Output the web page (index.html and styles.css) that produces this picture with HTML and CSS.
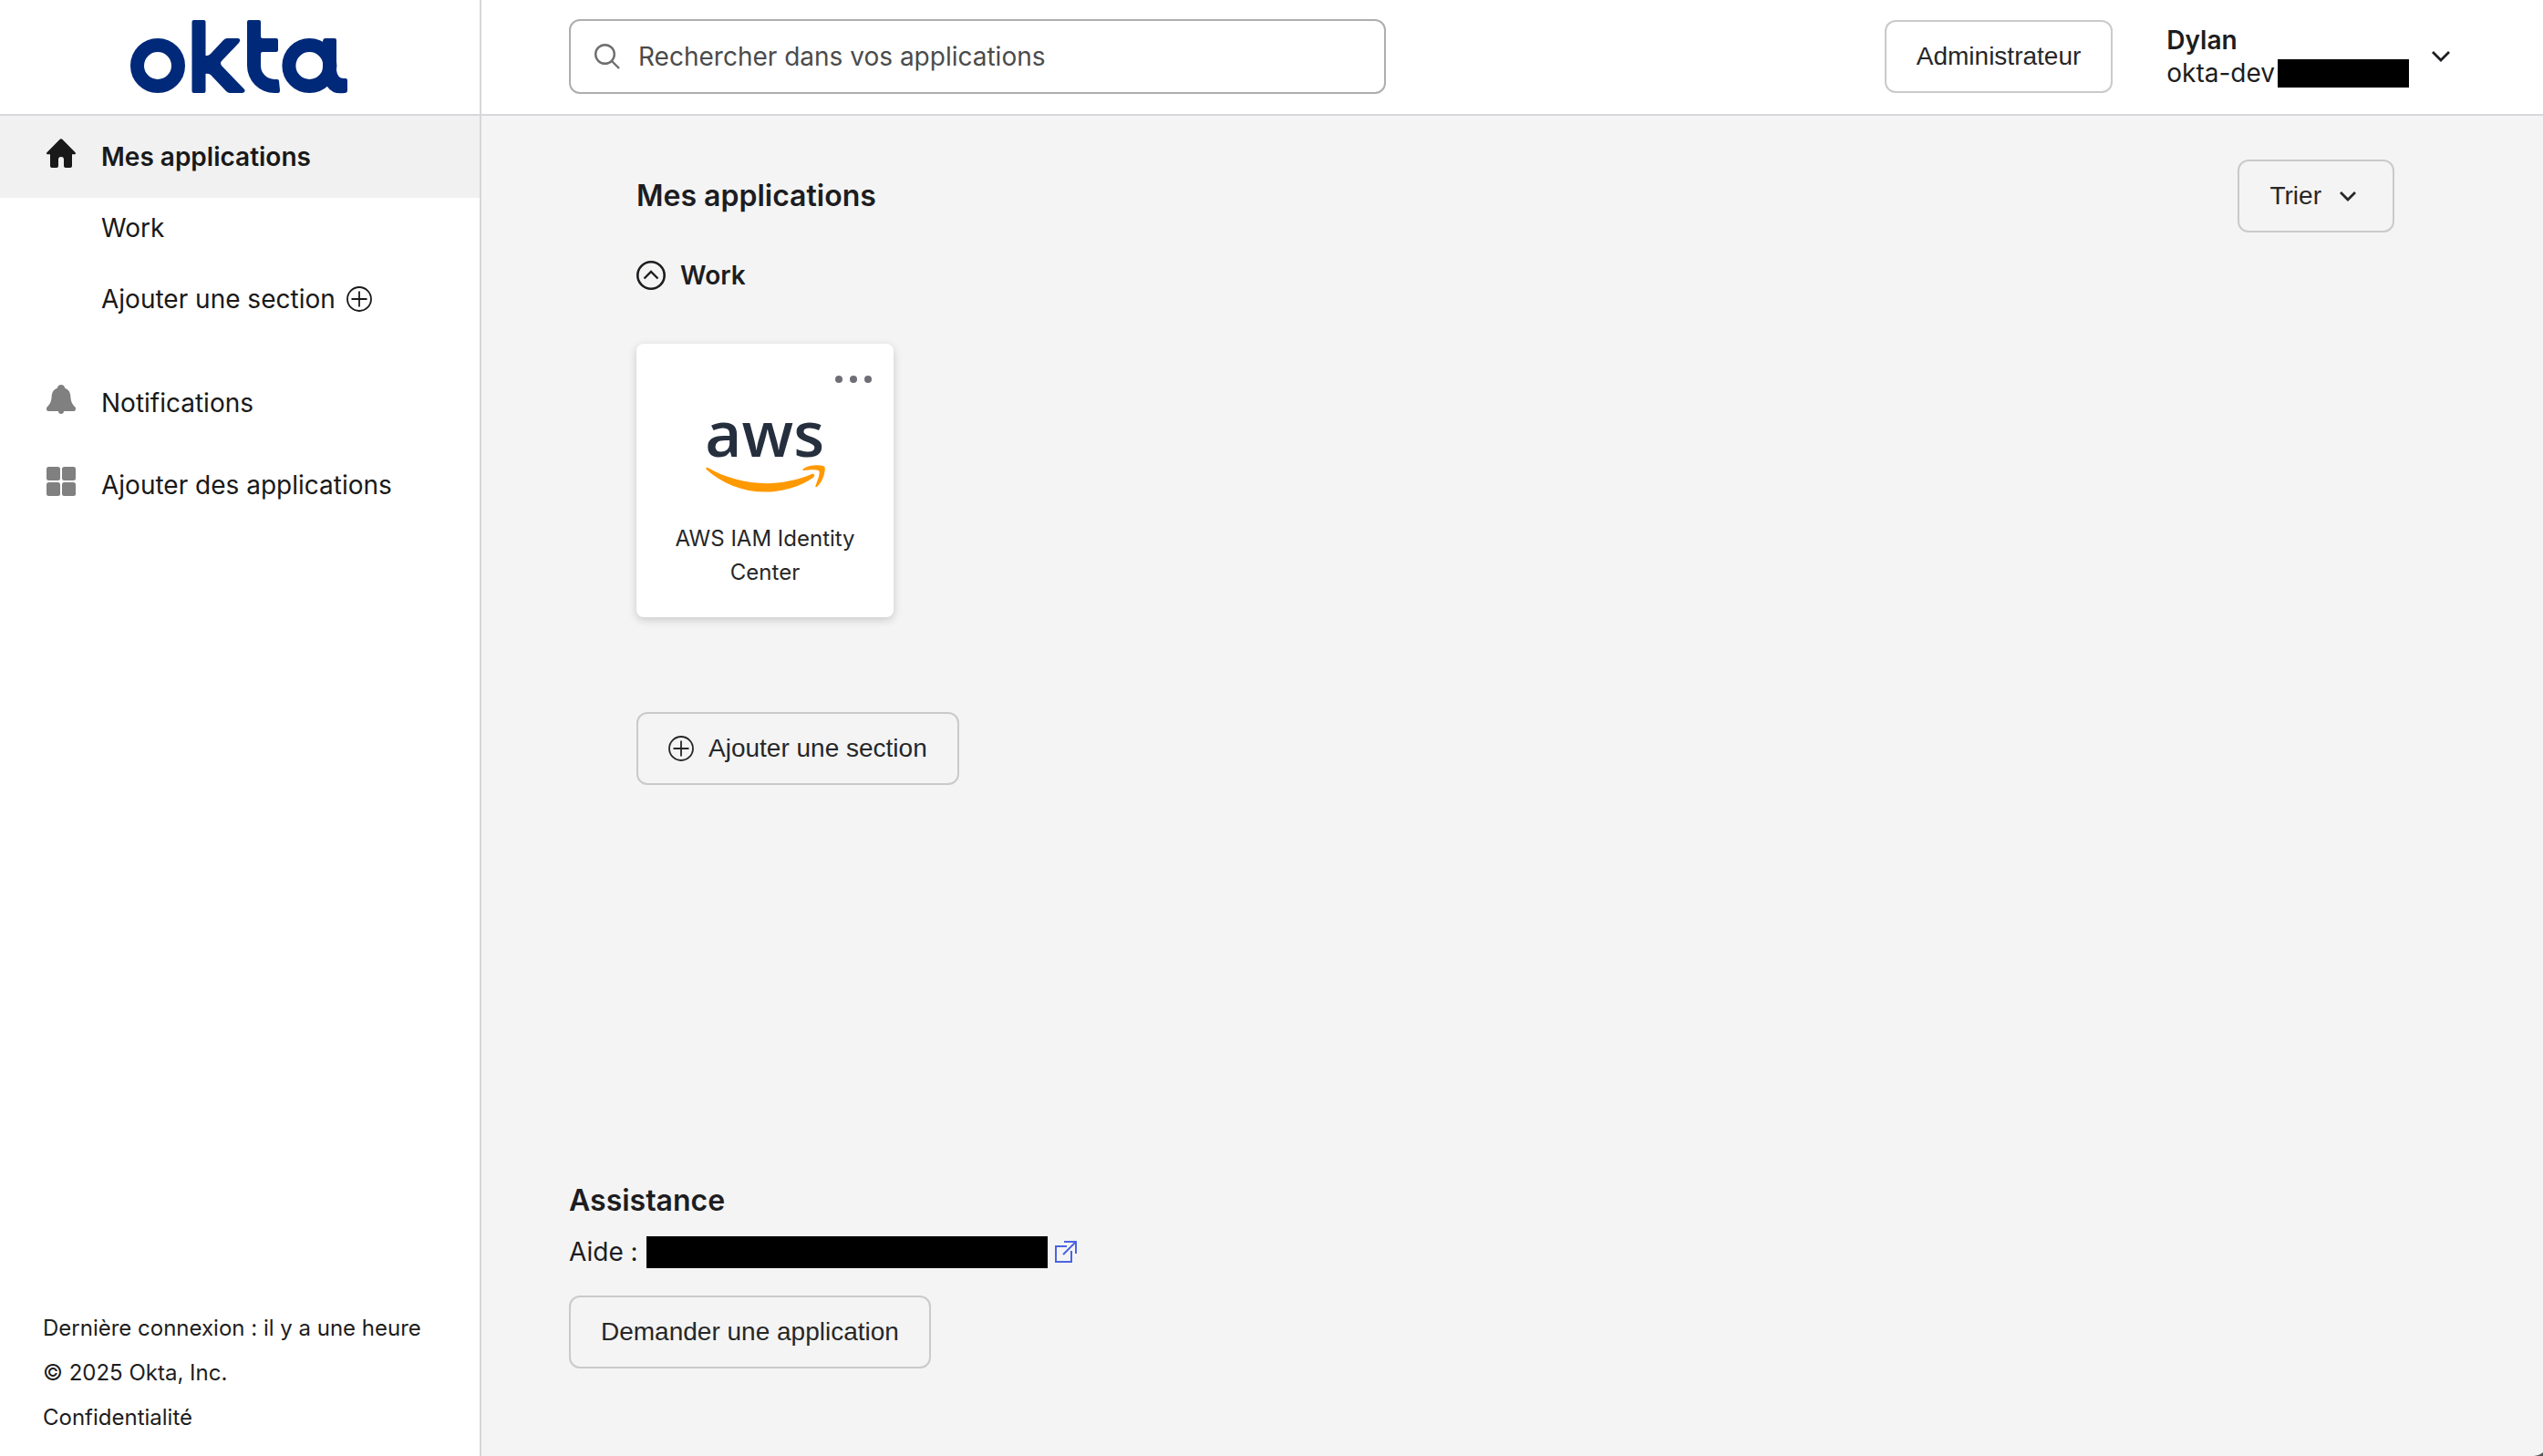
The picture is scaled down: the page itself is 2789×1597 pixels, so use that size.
FILE: index.html
```html
<!DOCTYPE html>
<html lang="fr">
<head>
<meta charset="utf-8">
<meta name="viewport" content="width=device-width, initial-scale=1">
<title>Mes applications</title>
<link rel="stylesheet" href="styles.css">
</head>
<body>
<div class="layout">
  <aside class="sidebar">
    <a class="brand" href="#" aria-label="okta">
      <svg class="brand-logo" viewBox="0 0 238 80" fill="#00297a" aria-hidden="true">
        <circle cx="30" cy="50" r="22.5" fill="none" stroke="#00297a" stroke-width="15"/>
        <rect x="67.5" width="15" height="80" rx="2"/>
        <path d="M82 39h2q2 0 4-2l14-15q2-2 4-2h12q4 1 1 5l-19 20q-2 2 0 5l25 26q2 3-2 4h-14q-2 0-4-2L88 60q-3-2-6-1z"/>
        <path d="M130 0h11q2 0 2 2v16q0 2 2 2h15q2 0 2 2v11q0 2-2 2h-15q-2 0-2 2v13a15 15 0 0 0 15 15h3q2 0 2 2l1 10q0 3-2 3h-4a30 30 0 0 1-30-30V2q0-2 2-2z"/>
        <circle cx="196.400" cy="50" r="22.500" fill="none" stroke="#00297a" stroke-width="15"/>
        <path d="M211 24q0-4 3-4h10q2 0 2 2v33q1 9 8 9h2q2 0 2 2v11q0 3-3 3-13 2-19-7l-6-6 1-17z"/>
      </svg>
    </a>
    <nav class="nav">
      <a class="nav-item active" href="#">
        <svg class="nav-icon" viewBox="0 0 32 32" fill="currentColor" aria-hidden="true"><path d="M14.700.700a2 2 0 0 1 2.600 0L31.600 15.300c.800.900.400 2-.600 2h-3V30a2 2 0 0 1-2 2h-5a2 2 0 0 1-2-2v-7a3 3 0 0 0-6 0v7a2 2 0 0 1-2 2H6a2 2 0 0 1-2-2V17.300H1c-1 0-1.400-1.100-.600-2z"/></svg>
        <span>Mes applications</span>
      </a>
      <div class="sub-nav">
        <a class="sub-item" href="#work">Work</a>
        <button class="sub-item" type="button">Ajouter une section
          <svg class="plus-icon" viewBox="0 0 28 28" fill="none" stroke="currentColor" stroke-width="1.800" aria-hidden="true"><circle cx="14" cy="14" r="13"/><path d="M14 5.500v17M5.500 14h17"/></svg>
        </button>
      </div>
      <a class="nav-item muted" href="#">
        <svg class="nav-icon" viewBox="0 0 32 32" fill="currentColor" aria-hidden="true"><path d="M12 3.500C12 1.500 13.800 0 16 0s4 1.500 4 3.500c4 1.500 6 4.500 6.300 8.500.500 7 1.700 9 4.700 12 2 2.300 1 5-1.500 5H19c0 2-1.300 3-3 3s-3-1-3-3H2.500C0 29-1 26.300 1 24c3-3 4.200-5 4.700-12C6 8 8 5 12 3.500z"/></svg>
        <span>Notifications</span>
      </a>
      <a class="nav-item muted" href="#">
        <svg class="nav-icon" viewBox="0 0 32 32" fill="currentColor" aria-hidden="true"><rect width="15" height="15" rx="2.500"/><rect x="17" width="15" height="15" rx="2.500"/><rect y="17" width="15" height="15" rx="2.500"/><rect x="17" y="17" width="15" height="15" rx="2.500"/></svg>
        <span>Ajouter des applications</span>
      </a>
    </nav>
    <footer class="sidebar-footer">
      <span>Dernière connexion : il y a une heure</span>
      <span>© 2025 Okta, Inc.</span>
      <a href="#">Confidentialité</a>
    </footer>
  </aside>

  <div class="page">
    <header class="topbar">
      <label class="search">
        <svg class="search-icon" viewBox="0 0 28 28" fill="none" stroke="currentColor" stroke-width="2.400" aria-hidden="true"><circle cx="11.500" cy="11.500" r="10.300"/><path d="M19 19l8 8"/></svg>
        <input class="search-input" type="search" aria-label="Rechercher dans vos applications" placeholder="Rechercher dans vos applications">
      </label>
      <div class="account">
        <button class="btn" type="button">Administrateur</button>
        <button class="user" type="button">
          <span class="user-text">
            <strong>Dylan</strong>
            <span class="user-org">okta-dev<span class="redacted redacted-org"></span></span>
          </span>
          <svg class="user-chevron" viewBox="0 0 20 12" fill="none" stroke="currentColor" stroke-width="2.800" aria-hidden="true"><path d="M1 1l9 9 9-9"/></svg>
        </button>
      </div>
    </header>

    <main class="content">
      <div class="title-row">
        <h1 class="title">Mes applications</h1>
        <button class="btn sort" type="button">Trier
          <svg class="sort-chevron" viewBox="0 0 18 11" fill="none" stroke="currentColor" stroke-width="2.800" aria-hidden="true"><path d="M1 1l8 8 8-8"/></svg>
        </button>
      </div>
      <section id="work">
        <h2 class="section-head">
          <button class="section-toggle" type="button" aria-expanded="true">
            <svg class="toggle-icon" viewBox="0 0 32 32" fill="none" stroke="currentColor" aria-hidden="true"><circle cx="16" cy="16" r="14.700" stroke-width="2.600"/><path d="M8.500 19.500L16 12l7.500 7.500" stroke-width="2.400"/></svg>
            Work
          </button>
        </h2>
        <article class="card">
          <button class="card-menu" type="button" aria-label="Options">
            <svg class="dots" viewBox="0 0 40 8" fill="#6e6e78" aria-hidden="true"><circle cx="4" cy="4" r="4"/><circle cx="20" cy="4" r="4"/><circle cx="36" cy="4" r="4"/></svg>
          </button>
          <svg class="aws-logo" viewBox="0 0 304 182" aria-hidden="true">
            <text class="aws-word" x="150" y="92" text-anchor="middle">aws</text>
            <path fill="#f90" d="M273.500 143.700c-32.900 24.300-80.700 37.200-121.800 37.200-57.600 0-109.500-21.300-148.700-56.700-3.100-2.800-.300-6.600 3.400-4.400 42.400 24.600 94.700 39.500 148.800 39.500 36.500 0 76.600-7.600 113.500-23.200 5.500-2.500 10.200 3.600 4.800 7.600z"/>
            <path fill="#f90" d="M287.200 128.100c-4.200-5.400-27.800-2.600-38.500-1.300-3.200.400-3.700-2.400-.800-4.500 18.800-13.200 49.700-9.400 53.300-5 3.600 4.500-1 35.400-18.600 50.200-2.700 2.300-5.300 1.100-4.100-1.900 4-9.900 12.900-32.200 8.700-37.500z"/>
          </svg>
          <a class="card-name" href="#">AWS IAM Identity Center</a>
        </article>
      </section>
      <button class="btn add-section" type="button">
        <svg class="plus-icon" viewBox="0 0 28 28" fill="none" stroke="currentColor" stroke-width="1.800" aria-hidden="true"><circle cx="14" cy="14" r="13"/><path d="M14 5.500v17M5.500 14h17"/></svg>
        Ajouter une section
      </button>
    </main>

    <section class="support">
      <h2 class="title">Assistance</h2>
      <p class="help">Aide :
        <a class="help-link" href="#" aria-label="Aide">
          <span class="redacted redacted-mail"></span>
          <svg class="external" viewBox="0 0 24 24" fill="none" stroke="currentColor" stroke-width="2" aria-hidden="true"><path d="M13 6H1v17h17V11M10 1h13v13M23 1L9 15"/></svg>
        </a>
      </p>
      <button class="btn" type="button">Demander une application</button>
    </section>
  </div>
</div>
<svg class="corner" viewBox="0 0 12 4" aria-hidden="true"><path d="M2 4Q8 3.500 12 0V4z" fill="#555"/></svg>
</body>
</html>
```
FILE: styles.css
```css
* {
  box-sizing: border-box;
}

body {
  margin: 0;
  background: #f4f4f4;
  color: #1d1d21;
  font: 400 28px/36px Inter, "Liberation Sans", sans-serif;
}

a {
  color: inherit;
  text-decoration: none;
}

button {
  padding: 0;
  border: 0;
  background: none;
  color: inherit;
  font: inherit;
  text-align: left;
  cursor: pointer;
}

svg {
  display: block;
  flex: none;
  overflow: visible;
}

h1,
h2,
p {
  margin: 0;
}

.layout {
  display: grid;
  grid-template-columns: 528px 1fr;
  min-height: 100vh;
}

/* Sidebar */

.sidebar {
  display: flex;
  flex-direction: column;
  border-right: 2px solid #d7d7da;
  background: #fff;
}

.brand {
  display: flex;
  justify-content: center;
  padding: 22px 2px 23px 0;
  border-bottom: 2px solid #d7d7dc;
}

.brand-logo {
  width: 238px;
  height: 80px;
}

.nav {
  color: #191919;
  line-height: 40px;
}

.nav-item {
  display: flex;
  gap: 28px;
  padding: 25px 51px;
}

.nav-item.active {
  background: #f1f1f1;
  font-weight: 600;
}

.nav-icon {
  width: 32px;
  height: 32px;
}

.muted .nav-icon {
  color: #808080;
}

.sub-nav {
  display: flex;
  flex-direction: column;
  gap: 38px;
  padding: 13px 51px 49px 111px;
}

.sub-item {
  display: flex;
  align-items: center;
  gap: 12px;
}

.plus-icon {
  width: 28px;
  height: 28px;
}

.sidebar-footer {
  display: flex;
  flex-direction: column;
  gap: 17px;
  margin-top: auto;
  padding: 24px 47px 26px;
  font-size: 24px;
  line-height: 32px;
}

/* Top bar */

.page {
  display: flex;
  flex-direction: column;
  min-width: 0;
}

.topbar {
  display: flex;
  align-items: center;
  justify-content: space-between;
  padding: 21px 102px 22px 96px;
  border-bottom: 2px solid #d7d7dc;
  background: #fff;
}

.search {
  display: flex;
  align-items: center;
  gap: 20px;
  flex: 0 1 896px;
  height: 82px;
  padding: 0 26px;
  border: 2px solid #aeaeae;
  border-radius: 12px;
  color: #6e6e6e;
}

.search-icon {
  width: 28px;
  height: 28px;
}

.search-input {
  flex: 1;
  min-width: 0;
  padding: 0;
  border: 0;
  outline: 0;
  background: none;
  color: #1d1d21;
  font: inherit;
}

.search-input::placeholder {
  color: #4b4b4b;
  opacity: 1;
}

.account,
.user {
  display: flex;
  align-items: center;
}

.account {
  gap: 59px;
}

.user {
  gap: 25px;
}

.user-text {
  display: flex;
  flex-direction: column;
}

.user-text strong {
  font-weight: 600;
}

.user-org {
  display: flex;
  align-items: center;
  gap: 3px;
}

.redacted {
  background: #000;
}

.redacted-org {
  width: 144px;
  height: 31px;
}

.user-chevron {
  width: 20px;
  height: 12px;
}

.btn {
  display: flex;
  align-items: center;
  gap: 16px;
  height: 80px;
  padding: 0 33px;
  border: 2px solid #cacaca;
  border-radius: 12px;
  color: #272727;
  font-family: "Liberation Sans", Arial, sans-serif;
}

/* Applications */

.content {
  padding: 48px 163px 48px 170px;
}

.title-row {
  display: flex;
  align-items: center;
  justify-content: space-between;
}

.title {
  font-size: 32px;
  font-weight: 600;
  line-height: 40px;
}

.sort {
  gap: 20px;
  padding-right: 40px;
}

.sort-chevron {
  width: 18px;
  height: 11px;
}

.section-head {
  margin: 29px 0 57px;
  font-size: 28px;
  font-weight: 600;
}

.section-toggle {
  display: flex;
  align-items: center;
  gap: 16px;
}

.toggle-icon {
  width: 32px;
  height: 32px;
}

.card {
  display: flex;
  flex-direction: column;
  align-items: center;
  width: 282px;
  padding: 35px 24px 31px;
  border-radius: 8px;
  background: #fff;
  box-shadow: 0 3px 10px rgba(29, 29, 33, 0.2);
}

.card-menu {
  align-self: flex-end;
  margin-bottom: 41px;
}

.dots {
  width: 40px;
  height: 8px;
}

.aws-logo {
  width: 133px;
  height: 79px;
  margin-bottom: 32px;
}

.aws-word {
  fill: #252f3e;
  font: 600 160px "Open Sans", "Noto Sans", sans-serif;
}

.card-name {
  color: #272727;
  font-size: 24px;
  line-height: 37px;
  text-align: center;
}

.add-section {
  margin-top: 104px;
}

/* Support */

.support {
  display: flex;
  flex-direction: column;
  align-items: flex-start;
  margin-top: auto;
  padding: 0 96px 96px;
}

.help,
.help-link {
  display: flex;
  align-items: center;
}

.help {
  gap: 9px;
  margin: 18px 0 30px;
}

.help-link {
  gap: 8px;
  color: #4c64e1;
}

.redacted-mail {
  width: 440px;
  height: 35px;
}

.external {
  width: 24px;
  height: 24px;
}

.corner {
  position: fixed;
  right: 0;
  bottom: 0;
  width: 12px;
  height: 4px;
}
```
